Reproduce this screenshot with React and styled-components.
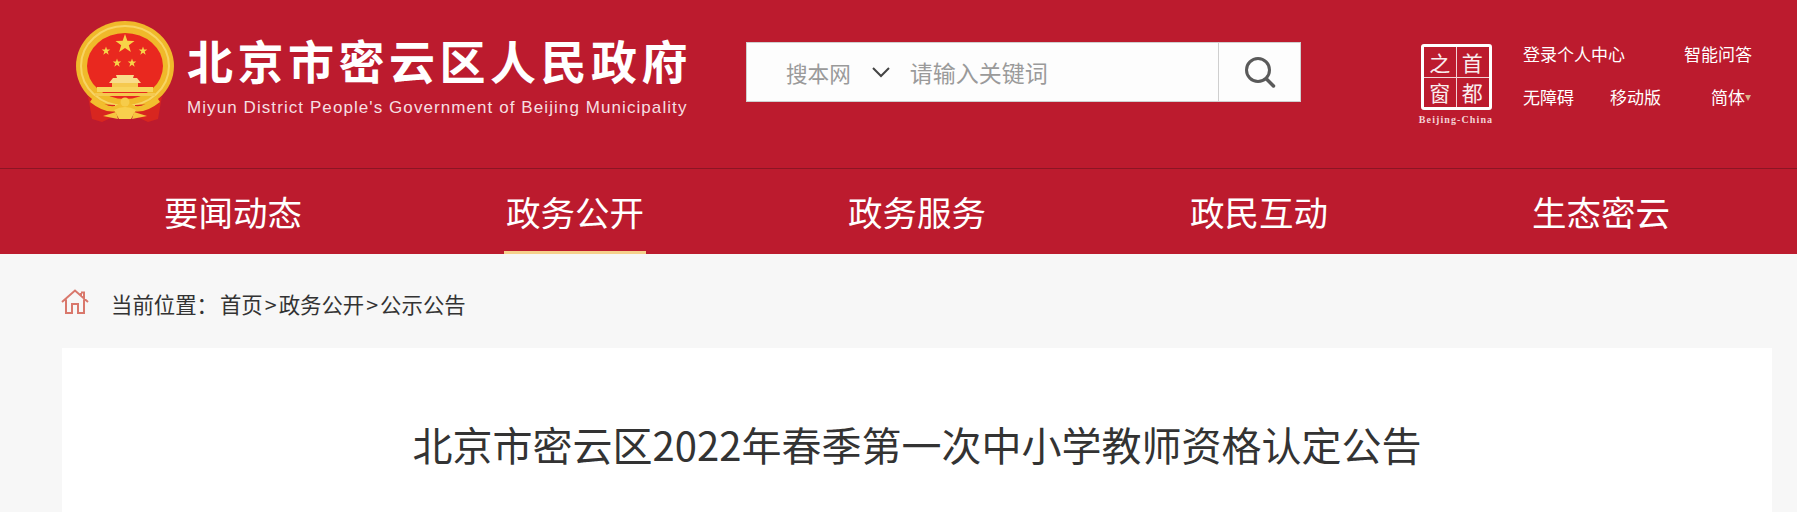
import React from "react";
import styled, { createGlobalStyle } from "styled-components";

const FONT = `"Noto Sans CJK SC", "Open Sans", sans-serif`;

const GlobalStyle = createGlobalStyle`
  html, body {
    margin: 0;
    height: 100%;
    overflow: hidden;
    background: #f7f7f7;
    font-family: ${FONT};
  }
  * {
    box-sizing: border-box;
  }
`;

const Header = styled.header`
  height: 169px;
  display: flex;
  align-items: flex-start;
  padding-left: 75px;
  background: #bc1b2e;
  border-bottom: 1px solid #8c1524;
`;

const Emblem = styled.svg`
  flex: none;
  width: 100px;
  height: 104px;
  margin-top: 20px;
`;

const Brand = styled.div`
  flex: none;
  width: 559px;
  margin-left: 12px;
  color: #fff;
`;

const BrandName = styled.div`
  margin-top: 29px;
  font-size: 46px;
  line-height: 60px;
  font-weight: 700;
  letter-spacing: 4.5px;
  white-space: nowrap;
`;

const BrandSub = styled.div`
  margin-top: 9px;
  font-family: "Liberation Sans", sans-serif;
  font-size: 17px;
  line-height: 20px;
  letter-spacing: 1.08px;
  color: #f6dfe2;
  white-space: nowrap;
`;

const Search = styled.div`
  flex: none;
  width: 555px;
  height: 60px;
  margin-top: 42px;
  display: flex;
  align-items: center;
  background: #fdfdfd;
  border: 1px solid #cfcfcf;
`;

const SearchScope = styled.span`
  margin-left: 39px;
  font-size: 21.6px;
  color: #9a9a9a;
`;

const Chevron = styled.svg`
  width: 20px;
  height: 12px;
  margin-left: 20px;
`;

const Placeholder = styled.span`
  flex: 1;
  margin-left: 19px;
  font-size: 23px;
  color: #9a9a9a;
`;

const SearchButton = styled.div`
  flex: none;
  width: 82px;
  height: 100%;
  display: flex;
  align-items: center;
  justify-content: center;
  border-left: 1px solid #cfcfcf;
`;

const SealBlock = styled.div`
  flex: none;
  width: 78px;
  margin: 44px 0 0 116px;
  display: flex;
  flex-direction: column;
  align-items: center;
`;

const Seal = styled.div`
  width: 71px;
  height: 66px;
  display: grid;
  grid-template-columns: 1fr 1fr;
  grid-template-rows: 1fr 1fr;
  border: 3px solid #fff;
  border-radius: 3px;
  background: linear-gradient(#f3d3d7, #f3d3d7) center / 1px 100% no-repeat,
    linear-gradient(#f3d3d7, #f3d3d7) center / 100% 1px no-repeat;
`;

const SealChar = styled.span`
  display: flex;
  align-items: center;
  justify-content: center;
  font-size: 21px;
  line-height: 1;
  color: #fff;
  opacity: 0.92;
`;

const SealCaption = styled.div`
  margin-top: 4px;
  font-family: "Liberation Serif", serif;
  font-size: 10px;
  line-height: 11px;
  font-weight: 700;
  letter-spacing: 1.1px;
  color: #f3d3d7;
  white-space: nowrap;
`;

const Links = styled.div`
  flex: none;
  width: 240px;
  margin: 41px 0 0 28px;
  display: flex;
  flex-direction: column;
  gap: 18px;
`;

const LinkRow = styled.div`
  display: flex;
  height: 25px;
  align-items: center;
`;

const TopLink = styled.a`
  flex: none;
  width: ${(p) => p.$w}px;
  font-size: 17px;
  line-height: 25px;
  color: #fff;
  white-space: nowrap;
`;

const Caret = styled.i`
  display: inline-block;
  vertical-align: 3px;
  border-top: 6px solid #d9b48a;
  border-left: 3.5px solid transparent;
  border-right: 3.5px solid transparent;
`;

const Nav = styled.nav`
  height: 85px;
  padding-left: 62px;
  display: flex;
  background: #bc1b2e;
`;

const NavItem = styled.div`
  flex: none;
  width: 342px;
  display: flex;
  justify-content: center;
`;

const NavLabel = styled.a`
  width: 142px;
  height: 85px;
  padding-top: 4px;
  text-align: center;
  font-size: 34.5px;
  line-height: 76px;
  color: #fff;
  white-space: nowrap;
  border-bottom: 3px solid ${(p) => (p.$active ? "#f5d18c" : "transparent")};
`;

const Crumbs = styled.div`
  height: 94px;
  padding: 6px 0 0 61px;
  display: flex;
  align-items: center;
`;

const HomeIcon = styled.svg`
  flex: none;
  width: 28px;
  height: 25px;
  margin-right: 22px;
  margin-bottom: 6px;
`;

const CrumbText = styled.span`
  font-size: 21.4px;
  line-height: 28px;
  color: #333;
  white-space: nowrap;
`;

const CrumbLabel = styled.span`
  margin-right: 2px;
`;

const CrumbSep = styled.span`
  margin: 0 2px;
`;

const Card = styled.main`
  width: 1710px;
  height: 164px;
  margin-left: 62px;
  padding-top: 66px;
  background: #fff;
`;

const Title = styled.h1`
  margin: 0;
  text-align: center;
  font-size: 40px;
  line-height: 60px;
  font-weight: 400;
  color: #333;
`;

const starPath = (cx, cy, r) => {
  const pts = [];
  for (let i = 0; i < 10; i++) {
    const rad = i % 2 === 0 ? r : r * 0.4;
    const a = -Math.PI / 2 + (i * Math.PI) / 5;
    pts.push(`${(cx + rad * Math.cos(a)).toFixed(2)},${(cy + rad * Math.sin(a)).toFixed(2)}`);
  }
  return pts.join(" ");
};

const EmblemArt = () => (
  <Emblem viewBox="0 0 100 104">
    <ellipse cx="50" cy="46" rx="49" ry="45" fill="#f0b92a" />
    <ellipse cx="50" cy="46" rx="44" ry="40" fill="none" stroke="#f8d463" strokeWidth="2" />
    <ellipse cx="50" cy="46" rx="38" ry="33" fill="#e9281f" />
    <polygon points={starPath(50, 24, 10)} fill="#f7d348" />
    <polygon points={starPath(31, 31, 4.5)} fill="#f7d348" />
    <polygon points={starPath(68, 31, 4.5)} fill="#f7d348" />
    <polygon points={starPath(42, 43, 4.5)} fill="#f7d348" />
    <polygon points={starPath(57, 43, 4.5)} fill="#f7d348" />
    <path d="M34 63 L38 58 L42 58 L41 55 H59 L58 58 L62 58 L66 63 Z" fill="#f9dc8a" />
    <rect x="37" y="63" width="26" height="4" fill="#f5c94f" />
    <rect x="22" y="67" width="56" height="5" fill="#f8d55e" />
    <rect x="20" y="73" width="60" height="3" fill="#f5c94f" />
    <path d="M13 76 L23 84 L40 85 L40 96 L27 102 L17 99 Z" fill="#d8261f" />
    <path d="M87 76 L77 84 L60 85 L60 96 L73 102 L83 99 Z" fill="#d8261f" />
    <path d="M19 76 Q34 90 42 85 Q50 78 58 85 Q66 90 81 76 L85 82 Q70 94 58 91 L50 89 L42 91 Q30 94 15 82 Z" fill="#f2bd2e" />
    <path d="M39 90 Q50 84 61 90 L56 99 H44 Z" fill="#f8cf4d" />
    <path d="M28 96 L41 92 L43 99 Z M72 96 L59 92 L57 99 Z" fill="#f6c63f" />
    <circle cx="50" cy="82" r="4.5" fill="#f6cc4a" />
  </Emblem>
);

const NAV_ITEMS = ["要闻动态", "政务公开", "政务服务", "政民互动", "生态密云"];

export default function App() {
  return (
    <>
      <GlobalStyle />
      <Header>
        <EmblemArt />
        <Brand>
          <BrandName>北京市密云区人民政府</BrandName>
          <BrandSub>Miyun District People's Government of Beijing Municipality</BrandSub>
        </Brand>
        <Search>
          <SearchScope>搜本网</SearchScope>
          <Chevron viewBox="0 0 20 12">
            <path d="M2 2 L10 10 L18 2" fill="none" stroke="#444" strokeWidth="2" />
          </Chevron>
          <Placeholder>请输入关键词</Placeholder>
          <SearchButton>
            <svg width="32" height="32" viewBox="0 0 32 32">
              <circle cx="14" cy="14" r="11.5" fill="none" stroke="#5a5a5a" strokeWidth="3" />
              <path d="M22.5 23 L29.5 30" stroke="#5a5a5a" strokeWidth="3.5" strokeLinecap="round" />
            </svg>
          </SearchButton>
        </Search>
        <SealBlock>
          <Seal>
            <SealChar>之</SealChar>
            <SealChar>首</SealChar>
            <SealChar>窗</SealChar>
            <SealChar>都</SealChar>
          </Seal>
          <SealCaption>Beijing-China</SealCaption>
        </SealBlock>
        <Links>
          <LinkRow>
            <TopLink $w={161}>登录个人中心</TopLink>
            <TopLink $w={70}>智能问答</TopLink>
          </LinkRow>
          <LinkRow>
            <TopLink $w={87}>无障碍</TopLink>
            <TopLink $w={101}>移动版</TopLink>
            <TopLink $w={50}>
              简体
              <Caret />
            </TopLink>
          </LinkRow>
        </Links>
      </Header>
      <Nav>
        {NAV_ITEMS.map((label, i) => (
          <NavItem key={label}>
            <NavLabel $active={i === 1}>{label}</NavLabel>
          </NavItem>
        ))}
      </Nav>
      <Crumbs>
        <HomeIcon viewBox="0 0 28 25">
          <path
            d="M1 13 L14 1.5 L27 13 M5 10.5 V24 H11 V15 H17 V24 H23 V10.5 M20 4 V7.5 M20 3.5 L23 3.5 V10"
            fill="none"
            stroke="#d9786c"
            strokeWidth="2"
          />
        </HomeIcon>
        <CrumbText>
          <CrumbLabel>当前位置：</CrumbLabel>
          首页
          <CrumbSep>&gt;</CrumbSep>
          政务公开
          <CrumbSep>&gt;</CrumbSep>
          公示公告
        </CrumbText>
      </Crumbs>
      <Card>
        <Title>北京市密云区2022年春季第一次中小学教师资格认定公告</Title>
      </Card>
    </>
  );
}
